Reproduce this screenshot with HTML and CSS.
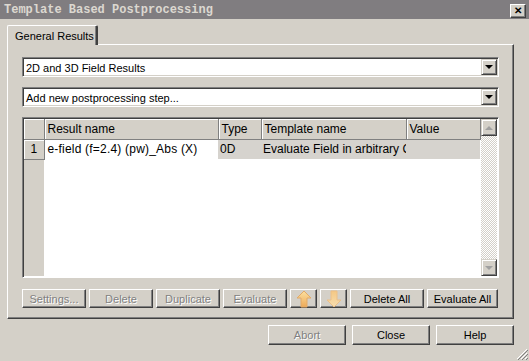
FILE: index.html
```html
<!DOCTYPE html>
<html lang="en">
<head>
    <meta charset="UTF-8">
    <title>Template Based Postprocessing</title>
    <link rel="stylesheet" href="styles.css">
</head>
<body>
    <div class="window">
        <div class="titlebar">
            <span class="title">Template Based Postprocessing</span>
            <span class="close">&#x2715;</span>
        </div>

        <div class="content">
            <div class="tabstrip">
                <div class="tab">General Results</div>
            </div>
            <div class="panel">
                <div class="combo">
                    <span class="combo-text">2D and 3D Field Results</span>
                    <span class="combo-btn"><span class="tri-down"></span></span>
                </div>
                <div class="combo">
                    <span class="combo-text">Add new postprocessing step...</span>
                    <span class="combo-btn"><span class="tri-down"></span></span>
                </div>

                <div class="grid-frame">
                    <div class="grid">
                        <table>
                            <tr class="head">
                                <th class="c-num"></th>
                                <th class="c-name">Result name</th>
                                <th class="c-type">Type</th>
                                <th class="c-tmpl">Template name</th>
                                <th class="c-val">Value</th>
                            </tr>
                            <tr class="row">
                                <td class="num">1</td>
                                <td class="current">e-field (f=2.4) (pw)_Abs (X)</td>
                                <td>0D</td>
                                <td class="clip">Evaluate Field in arbitrary C</td>
                                <td></td>
                            </tr>
                        </table>
                        <div class="num-fill"></div>
                    </div>
                    <div class="vscroll">
                        <span class="sbtn"><span class="tri-up grey"></span></span>
                        <span class="track"></span>
                        <span class="sbtn"><span class="tri-down grey"></span></span>
                    </div>
                </div>

                <div class="actions">
                    <button class="btn w64" disabled>Settings...</button>
                    <button class="btn w64" disabled>Delete</button>
                    <button class="btn w64" disabled>Duplicate</button>
                    <button class="btn w64" disabled>Evaluate</button>
                    <button class="btn w27">
                        <svg width="16" height="18" viewBox="0 0 16 18">
                            <defs>
                                <linearGradient id="ga" x1="0" y1="0" x2="0" y2="1">
                                    <stop offset="0" stop-color="#fbe0a0"/>
                                    <stop offset="1" stop-color="#eeaa58"/>
                                </linearGradient>
                            </defs>
                            <path d="M8 1 L15 8 H11 V17 H5 V8 H1 Z" fill="url(#ga)" stroke="#e2aa68" stroke-width="1"/>
                        </svg>
                    </button>
                    <button class="btn w27" disabled>
                        <svg width="16" height="18" viewBox="0 0 16 18">
                            <defs>
                                <linearGradient id="gb" x1="0" y1="0" x2="0" y2="1">
                                    <stop offset="0" stop-color="#f4c884"/>
                                    <stop offset="1" stop-color="#f7deb0"/>
                                </linearGradient>
                            </defs>
                            <path d="M5 1 H11 V10 H15 L8 17 L1 10 H5 Z" fill="url(#gb)" stroke="#ecc088" stroke-width="1"/>
                        </svg>
                    </button>
                    <button class="btn w74">Delete All</button>
                    <button class="btn w71">Evaluate All</button>
                </div>
            </div>

            <div class="footer">
                <button class="btn big" disabled>Abort</button>
                <button class="btn big">Close</button>
                <button class="btn big">Help</button>
            </div>
        </div>

        <svg class="grip" width="12" height="12" viewBox="0 0 12 12">
            <path d="M11 1 L1 11 M11 5 L5 11 M11 9 L9 11" stroke="#fff" stroke-width="1"/>
            <path d="M12 2 L2 12 M12 6 L6 12 M12 10 L10 12" stroke="#808080" stroke-width="1"/>
        </svg>
    </div>
</body>
</html>
```

FILE: styles.css
```css
*{
    margin: 0px;
    padding: 0px;
    box-sizing: border-box;
}

body{
    background: #d4d0c8;
    font-family: "Liberation Sans", Arial, sans-serif;
    font-size: 11px;
    color: #000;
}

.window{
    position: relative;
    width: 529px;
    height: 361px;
    background: #d4d0c8;
    overflow: hidden;
}

.titlebar{
    height: 19px;
    background: #807d80;
    display: flex;
    align-items: center;
    justify-content: space-between;
    padding: 0px 3px 0px 4px;
}
.title{
    font-family: "Liberation Mono", monospace;
    font-weight: bold;
    font-size: 12px;
    color: #dcd8d0;
}
.close{
    width: 16px;
    height: 14px;
    background: #d4d0c8;
    border: 1px solid;
    border-color: #fff #404040 #404040 #fff;
    box-shadow: inset -1px -1px #808080;
    font-size: 10px;
    font-weight: bold;
    line-height: 12px;
    text-align: center;
    margin-top: 2px;
}

.content{
    padding: 6px 15px 0px 7px;
}

/* tab */
.tabstrip{
    height: 19px;
    display: flex;
}
.tab{
    width: 91px;
    height: 20px;
    padding: 4px 0px 0px 7px;
    white-space: nowrap;
    border-left: 1px solid #fff;
    border-top: 1px solid #fff;
    border-right: 2px solid #404040;
    box-shadow: inset -1px 0px #808080;
    border-radius: 2px 2px 0px 0px;
    background: #d4d0c8;
    position: relative;
    z-index: 1;
}

.panel{
    height: 275px;
    border: 1px solid;
    border-color: #fff #404040 #404040 #fff;
    box-shadow: inset -1px -1px #808080;
    padding: 12px 14px 0px 14px;
}

/* combo boxes */
.combo{
    height: 20px;
    display: flex;
    background: #fff;
    border: 1px solid;
    border-color: #808080 #fff #fff #808080;
    box-shadow: inset 1px 1px #404040, inset -1px -1px #d4d0c8;
    padding: 1px;
    margin-bottom: 10px;
}
.combo-text{
    flex: 1;
    padding: 3px 0px 0px 2px;
}
.combo-btn{
    width: 16px;
    height: 16px;
    background: #d4d0c8;
    border: 1px solid;
    border-color: #d4d0c8 #404040 #404040 #d4d0c8;
    box-shadow: inset 1px 1px #fff, inset -1px -1px #808080;
    display: flex;
    align-items: center;
    justify-content: center;
}
.tri-down{
    width: 0px;
    height: 0px;
    border-left: 4px solid transparent;
    border-right: 4px solid transparent;
    border-top: 4px solid #000;
}
.tri-up{
    width: 0px;
    height: 0px;
    border-left: 4px solid transparent;
    border-right: 4px solid transparent;
    border-bottom: 4px solid #000;
}
.tri-down.grey{
    border-top-color: #a0a0a0;
}
.tri-up.grey{
    border-bottom-color: #a0a0a0;
}

/* grid */
.grid-frame{
    height: 161px;
    margin-top: 1px;
    display: flex;
    border: 1px solid;
    border-color: #808080 #fff #fff #808080;
    box-shadow: inset 1px 1px #404040;
    padding: 1px;
    background: #fff;
    font-size: 12px;
}
.grid{
    flex: 1;
    display: flex;
    flex-direction: column;
}
table{
    border-collapse: collapse;
    table-layout: fixed;
    width: 456px;
}
th, td{
    height: 20px;
    padding: 0px 0px 0px 3px;
    text-align: left;
    font-weight: normal;
    white-space: nowrap;
    overflow: hidden;
}
.head th{
    background: #d4d0c8;
    border-right: 1px solid #808080;
    border-bottom: 1px solid #808080;
    box-shadow: inset 1px 1px #fff;
}
.c-num{ width: 20px; }
.c-name{ width: 174px; }
.c-type{ width: 43px; }
.c-tmpl{ width: 145px; }
.c-val{ width: 74px; }
.row td{
    background: #d6d3ce;
    padding-left: 2px;
}
.row td.num{
    background: #d4d0c8;
    text-align: center;
    padding: 0px;
    border-right: 1px solid #808080;
    border-bottom: 1px solid #808080;
    box-shadow: inset 1px 1px #fff;
}
.row td.current{
    background: #fff;
    padding-left: 3px;
    letter-spacing: 0.2px;
}
.clip{
    text-overflow: clip;
}
.num-fill{
    flex: 1;
    width: 20px;
    background: #d4d0c8;
}

.vscroll{
    width: 17px;
    display: flex;
    flex-direction: column;
}
.sbtn{
    height: 17px;
    background: #d4d0c8;
    border: 1px solid;
    border-color: #d4d0c8 #404040 #404040 #d4d0c8;
    box-shadow: inset 1px 1px #fff, inset -1px -1px #808080;
    display: flex;
    align-items: center;
    justify-content: center;
}
.track{
    flex: 1;
    background: repeating-conic-gradient(#fff 0 25%, #d4d0c8 0 50%) 0 0 / 2px 2px;
}

/* buttons */
.actions{
    display: flex;
    gap: 3px;
    margin-top: 11px;
}
.btn{
    height: 19px;
    font-family: "Liberation Sans", Arial, sans-serif;
    font-size: 11px;
    color: #000;
    background: #d4d0c8;
    border: 1px solid;
    border-color: #fff #404040 #404040 #fff;
    box-shadow: inset -1px -1px #808080;
    display: flex;
    align-items: center;
    justify-content: center;
}
.btn:disabled{
    color: #808080;
    text-shadow: 1px 1px #fff;
}
.w64{ width: 64px; }
.w27{ width: 27px; }
.w74{ width: 74px; }
.w71{ width: 71px; }

.footer{
    display: flex;
    justify-content: flex-end;
    gap: 6px;
    margin-top: 6px;
}
.btn.big{
    width: 78px;
    height: 20px;
}

.grip{
    position: absolute;
    right: 1px;
    bottom: 1px;
}
```
